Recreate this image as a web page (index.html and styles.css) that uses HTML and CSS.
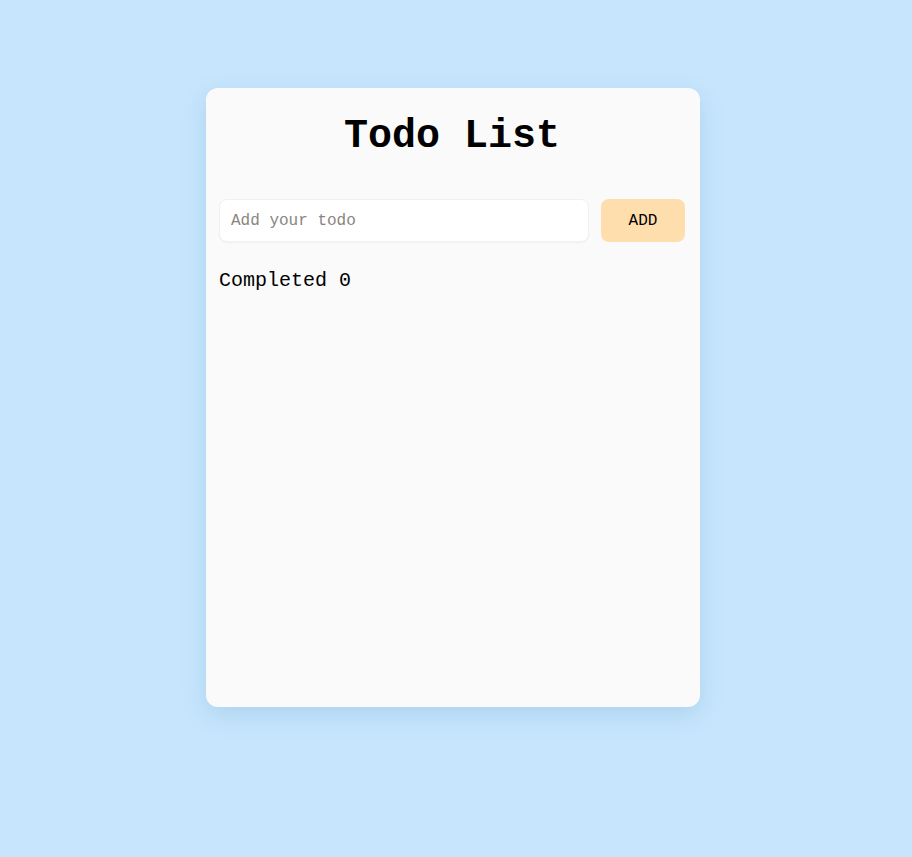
FILE: index.html
```html
<!DOCTYPE html>
<html>
<head>
<meta charset="utf-8">
<link rel="stylesheet" href="styles.css">
</head>
<body>
<div class="card">
  <h1 class="title">Todo List</h1>
  <form class="form">
    <input class="input" type="text" placeholder="Add your todo">
    <button class="btn" type="button">ADD</button>
  </form>
  <p class="completed">Completed 0</p>
</div>
</body>
</html>
```
FILE: styles.css
```css
html, body {
  margin: 0;
  padding: 0;
}
body {
  background: #c7e6fd;
  font-family: "Courier New", "Liberation Mono", monospace;
  min-height: 857px;
  padding-top: 88px;
  box-sizing: border-box;
}
.card {
  width: 494px;
  height: 619px;
  margin-left: 206px;
  background: #fafafa;
  border-radius: 12px;
  box-shadow: 0 8px 24px rgba(60, 120, 170, 0.18);
  padding: 25px 15px 0 13px;
  box-sizing: border-box;
}
.title {
  margin: 0;
  text-align: center;
  font-size: 40px;
  line-height: 48px;
  font-weight: bold;
  color: #000;
}
.form {
  display: flex;
  gap: 12px;
  margin-top: 38px;
}
.input {
  flex: 1;
  height: 43px;
  box-sizing: border-box;
  border: 1px solid #f1f1f1;
  box-shadow: 0 1px 2px rgba(0, 0, 0, 0.04);
  border-radius: 8px;
  background: #fff;
  padding: 0 11px;
  font-family: "Courier New", "Liberation Mono", monospace;
  font-size: 16px;
  color: #000;
  outline: none;
}
.input::placeholder {
  color: #8a8580;
}
.btn {
  width: 84px;
  height: 43px;
  border: none;
  border-radius: 8px;
  background: #ffdeae;
  font-family: "Courier New", "Liberation Mono", monospace;
  font-size: 16px;
  color: #000;
  padding: 0;
}
.completed {
  margin: 27px 0 0;
  font-size: 20px;
  line-height: 24px;
  color: #000;
}
```
